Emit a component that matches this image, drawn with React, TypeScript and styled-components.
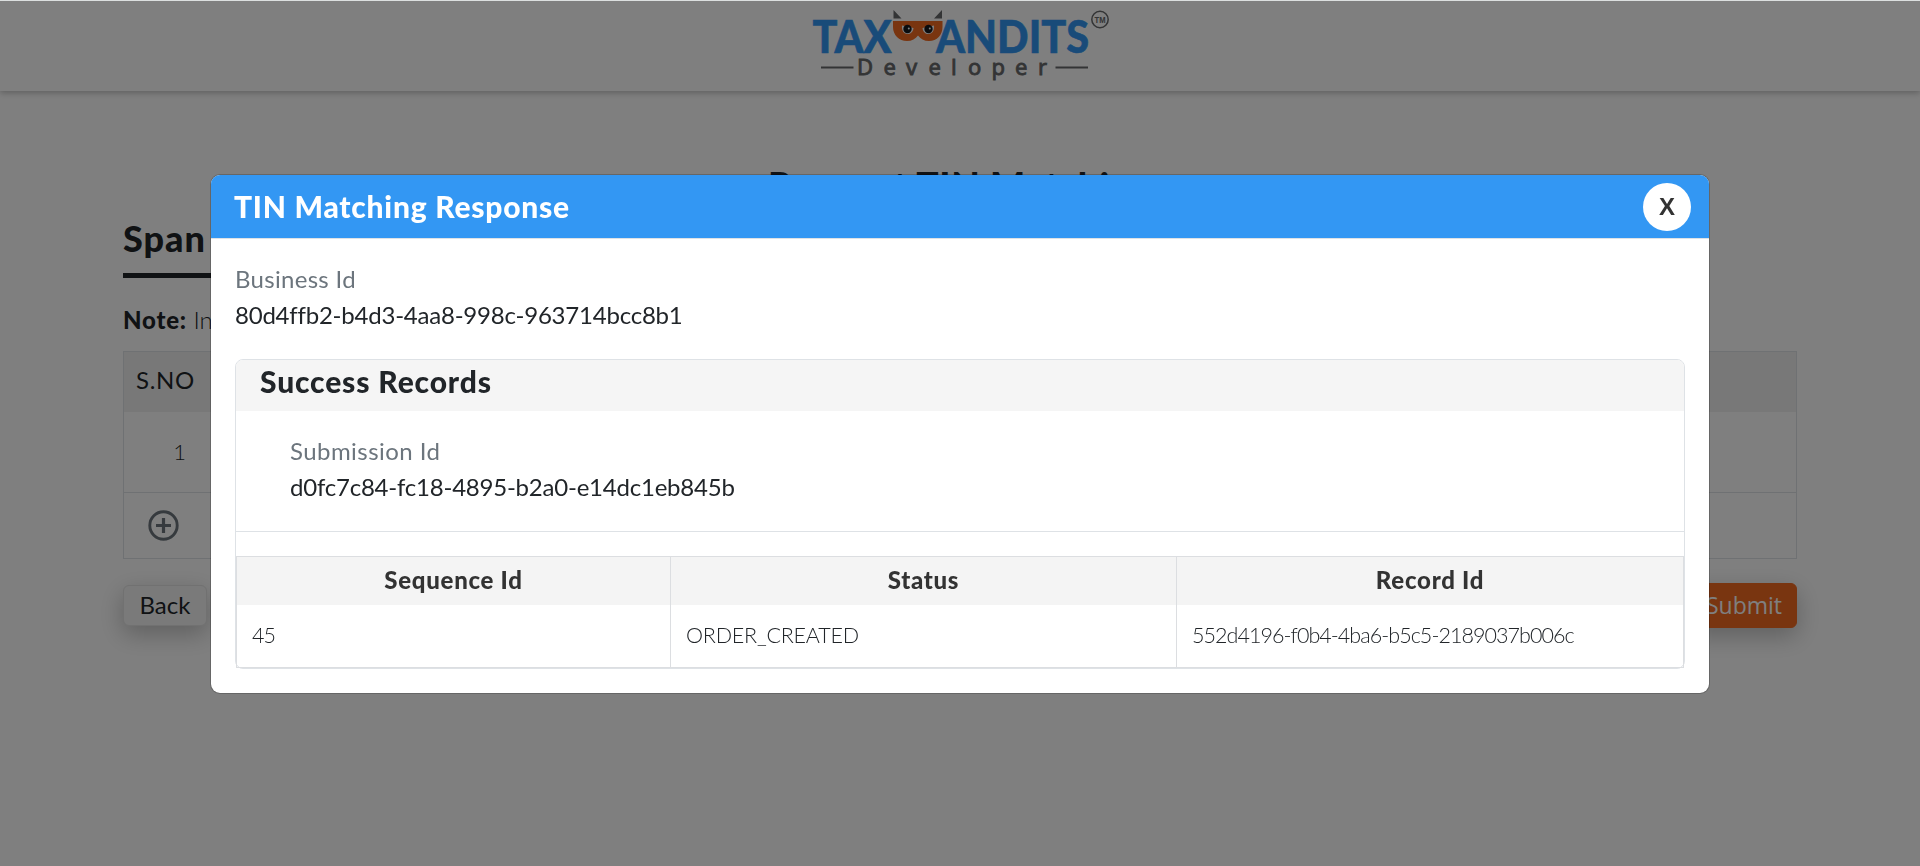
import React from "react";
import styled, { createGlobalStyle } from "styled-components";

const GlobalStyle = createGlobalStyle`
  *, *::before, *::after { box-sizing: border-box; }
  body {
    margin: 0;
    background: #fff;
    color: #212529;
    font-family: Lato, "Open Sans", sans-serif;
    font-size: 24px;
    line-height: 36px;
    overflow: hidden;
  }
`;

const Page = styled.div`
  height: 866px;
  overflow: hidden;
`;

const TopBar = styled.header`
  display: flex;
  justify-content: center;
  height: 91px;
  border-top: 1px solid #dcdfdf;
  background: #fff;
  box-shadow: 0 2px 6px rgba(0, 0, 0, 0.25);
`;

const Content = styled.main`
  width: 1674px;
  margin: 0 auto;
  padding-top: 68px;
`;

const PageTitle = styled.h1`
  margin: 0;
  text-align: center;
  font-size: 37px;
  line-height: 54px;
  font-weight: 900;
  letter-spacing: 0.7px;
`;

const BusinessName = styled.h2`
  width: 260px;
  height: 65px;
  margin: 0 0 24px;
  border-bottom: 5px solid #212529;
  font-size: 36px;
  line-height: 50px;
  font-weight: 900;
  letter-spacing: 1px;
`;

const Note = styled.p`
  margin: 0 0 13px;
  font-weight: 300;
  b { font-weight: 900; letter-spacing: 0.8px; }
`;

const RecordTable = styled.div`
  border: 1px solid #dee2e6;
`;

const RecordRow = styled.div<{ $height: number; $shade?: boolean; $line?: boolean }>`
  display: flex;
  align-items: center;
  height: ${(p) => p.$height}px;
  background: ${(p) => (p.$shade ? "#f1f1f1" : "#fff")};
  border-bottom: ${(p) => (p.$line ? "1px solid #dee2e6" : "0")};
`;

const SerialHead = styled.span`
  padding-left: 12px;
  padding-bottom: 4px;
  letter-spacing: 0.7px;
`;

const SerialNumber = styled.span`
  width: 62px;
  text-align: right;
  font-size: 22px;
  font-weight: 300;
`;

const AddIcon = styled.svg`
  margin-left: 24px;
`;

const Actions = styled.div`
  display: flex;
  justify-content: space-between;
  align-items: center;
  margin-top: 24px;
`;

const ActionButton = styled.button<{ $primary?: boolean }>`
  width: ${(p) => (p.$primary ? 106 : 84)}px;
  height: ${(p) => (p.$primary ? 45 : 41)}px;
  padding: 0 0 2px;
  border: 1px solid ${(p) => (p.$primary ? "#f26a21" : "#e2e2e2")};
  border-radius: 6px;
  background: ${(p) => (p.$primary ? "#f26a21" : "#f5f5f5")};
  color: ${(p) => (p.$primary ? "#fff" : "#212529")};
  box-shadow: 0 8px 24px rgba(0, 0, 0, 0.25);
  font: ${(p) => (p.$primary ? '400 23px "Open Sans"' : "400 24px Lato")}, sans-serif;
  white-space: nowrap;
`;

const Backdrop = styled.div`
  position: fixed;
  inset: 1px 0 0;
  display: flex;
  justify-content: center;
  align-items: flex-start;
  padding-top: 173px;
  background: rgba(0, 0, 0, 0.5);
`;

const Dialog = styled.section`
  width: 1500px;
  border: 1px solid rgba(0, 0, 0, 0.2);
  border-radius: 10px;
  background: #fff;
  background-clip: padding-box;
`;

const DialogHeader = styled.header`
  display: flex;
  justify-content: space-between;
  align-items: center;
  height: 64px;
  padding: 0 18px 0 23px;
  border-bottom: 1px solid #dee2e6;
  border-radius: 9px 9px 0 0;
  background: #3397f3;
`;

const DialogTitle = styled.h3`
  margin: 0;
  padding-bottom: 2px;
  color: #fff;
  font-size: 30px;
  line-height: 40px;
  font-weight: 900;
  letter-spacing: 0.75px;
`;

const CloseButton = styled.button`
  width: 48px;
  height: 48px;
  padding: 0;
  border: 0;
  border-radius: 50%;
  background: #fff;
  color: #333;
  font: 700 24px "Liberation Sans", sans-serif;
`;

const DialogBody = styled.div`
  padding: 22px 24px 24px;
`;

const Field = styled.dl`
  margin: 0;
`;

const FieldLabel = styled.dt<{ $spacing: number }>`
  color: #6c757d;
  letter-spacing: ${(p) => p.$spacing}px;
`;

const FieldValue = styled.dd`
  margin: 0;
  letter-spacing: -0.22px;
`;

const Card = styled.section`
  margin-top: 26px;
  border: 1px solid #dee2e6;
  border-radius: 8px;
`;

const CardHeader = styled.h4`
  height: 51px;
  margin: 0;
  padding-left: 24px;
  border-radius: 7px 7px 0 0;
  background: #f5f5f5;
  font-size: 30px;
  line-height: 43px;
  font-weight: 900;
  letter-spacing: 0.85px;
`;

const CardSection = styled.div`
  margin-bottom: 24px;
  padding: 22px 54px 26px;
  border-bottom: 1px solid #dee2e6;
`;

const ResultTable = styled.div`
  display: grid;
  grid-template-columns: 434px 506px 1fr;
  grid-template-rows: 48px 62px;
  border: 1px solid #dcdee1;
`;

const HeadCell = styled.div<{ $spacing: number }>`
  display: flex;
  justify-content: center;
  background: #f4f4f4;
  color: #333;
  font-weight: 900;
  line-height: 46px;
  letter-spacing: ${(p) => p.$spacing}px;
  border-right: 1px solid #dcdee1;
  &:nth-child(3n) { border-right: 0; }
`;

const Cell = styled.div<{ $spacing: number }>`
  padding-left: 15px;
  font-size: 21.5px;
  font-weight: 300;
  line-height: 60px;
  letter-spacing: ${(p) => p.$spacing}px;
  border-right: 1px solid #dcdee1;
  &:nth-child(3n) { border-right: 0; }
`;

const Logo = () => (
  <svg width="310" height="90" viewBox="805 1 310 90" role="img" aria-label="TaxBandits Developer">
    <g fill="#3397f3" stroke="#3397f3" strokeWidth="0.600" fontFamily="Lato, sans-serif" fontWeight="900" fontSize="45.500">
      <text x="812.500" y="53" textLength="79" lengthAdjust="spacingAndGlyphs">TAX</text>
      <text x="936" y="53" textLength="153" lengthAdjust="spacingAndGlyphs">ANDITS</text>
    </g>
    <path d="M893.500 10 L901.500 18.500 H893.500Z M942 10 L934 18.500 H942Z" fill="#66686a" />
    <path d="M893 21H942.500V27C942.500 35 937 41 929 41C924 41 920.500 39 918 35.500C915.500 39 912 41 907 41C899 41 893 35 893 27Z" fill="#f26a21" />
    <path d="M902 25.500L913.500 28C913 32 910.500 34 907.500 34C903.500 34 901.500 30 902 25.500ZM934 25.500L922.500 28C923 32 925.500 34 928.500 34C932.500 34 934.500 30 934 25.500Z" fill="#fff" />
    <circle cx="907.500" cy="29" r="4.200" fill="#16191c" />
    <circle cx="928.500" cy="29" r="4.200" fill="#16191c" />
    <circle cx="908.800" cy="28.500" r="1" fill="#fff" />
    <circle cx="929.800" cy="28.500" r="1" fill="#fff" />
    <circle cx="1100" cy="19.500" r="8.200" fill="none" stroke="#66686a" strokeWidth="1.500" />
    <text x="1094.500" y="22.800" fill="#66686a" fontFamily="Liberation Sans" fontWeight="700" fontSize="8.500" textLength="11" lengthAdjust="spacingAndGlyphs">TM</text>
    <path d="M821 67.500H853.500M1055.500 67.500H1088" stroke="#66686a" strokeWidth="2" />
    <text
      x="857 883.500 906 928.500 951 968 991.500 1015 1038"
      y="75"
      fill="#66686a"
      stroke="#66686a"
      strokeWidth="0.800"
      fontFamily="Noto Sans"
      fontSize="22"
    >Developer</text>
  </svg>
);

const columns = [
  { title: "Sequence Id", value: "45", head: 0.72, cell: -1 },
  { title: "Status", value: "ORDER_CREATED", head: 0.7, cell: -0.2 },
  { title: "Record Id", value: "552d4196-f0b4-4ba6-b5c5-2189037b006c", head: 0.75, cell: -0.95 },
];

export default function App() {
  return (
    <>
      <GlobalStyle />
      <Page>
        <TopBar><Logo /></TopBar>
        <Content>
          <PageTitle>Request TIN Matching</PageTitle>
          <BusinessName>Span</BusinessName>
          <Note><b>Note:</b> In</Note>
          <RecordTable>
            <RecordRow $height={60} $shade><SerialHead>S.NO</SerialHead></RecordRow>
            <RecordRow $height={81} $line><SerialNumber>1</SerialNumber></RecordRow>
            <RecordRow $height={65}>
              <AddIcon width="31" height="31" viewBox="0 0 31 31" fill="none" stroke="#6c757d">
                <circle cx="15.500" cy="15.500" r="13.700" strokeWidth="2.900" />
                <path d="M15.500 8V23M8 15.500H23" strokeWidth="3.200" />
              </AddIcon>
            </RecordRow>
          </RecordTable>
          <Actions>
            <ActionButton>Back</ActionButton>
            <ActionButton $primary>Submit</ActionButton>
          </Actions>
        </Content>
      </Page>
      <Backdrop>
        <Dialog role="dialog" aria-modal="true">
          <DialogHeader>
            <DialogTitle>TIN Matching Response</DialogTitle>
            <CloseButton aria-label="Close">X</CloseButton>
          </DialogHeader>
          <DialogBody>
            <Field>
              <FieldLabel $spacing={0.3}>Business Id</FieldLabel>
              <FieldValue>80d4ffb2-b4d3-4aa8-998c-963714bcc8b1</FieldValue>
            </Field>
            <Card>
              <CardHeader>Success Records</CardHeader>
              <CardSection>
                <Field>
                  <FieldLabel $spacing={0.44}>Submission Id</FieldLabel>
                  <FieldValue>d0fc7c84-fc18-4895-b2a0-e14dc1eb845b</FieldValue>
                </Field>
              </CardSection>
              <ResultTable>
                {columns.map((c) => <HeadCell key={c.title} $spacing={c.head}>{c.title}</HeadCell>)}
                {columns.map((c) => <Cell key={c.title} $spacing={c.cell}>{c.value}</Cell>)}
              </ResultTable>
            </Card>
          </DialogBody>
        </Dialog>
      </Backdrop>
    </>
  );
}
